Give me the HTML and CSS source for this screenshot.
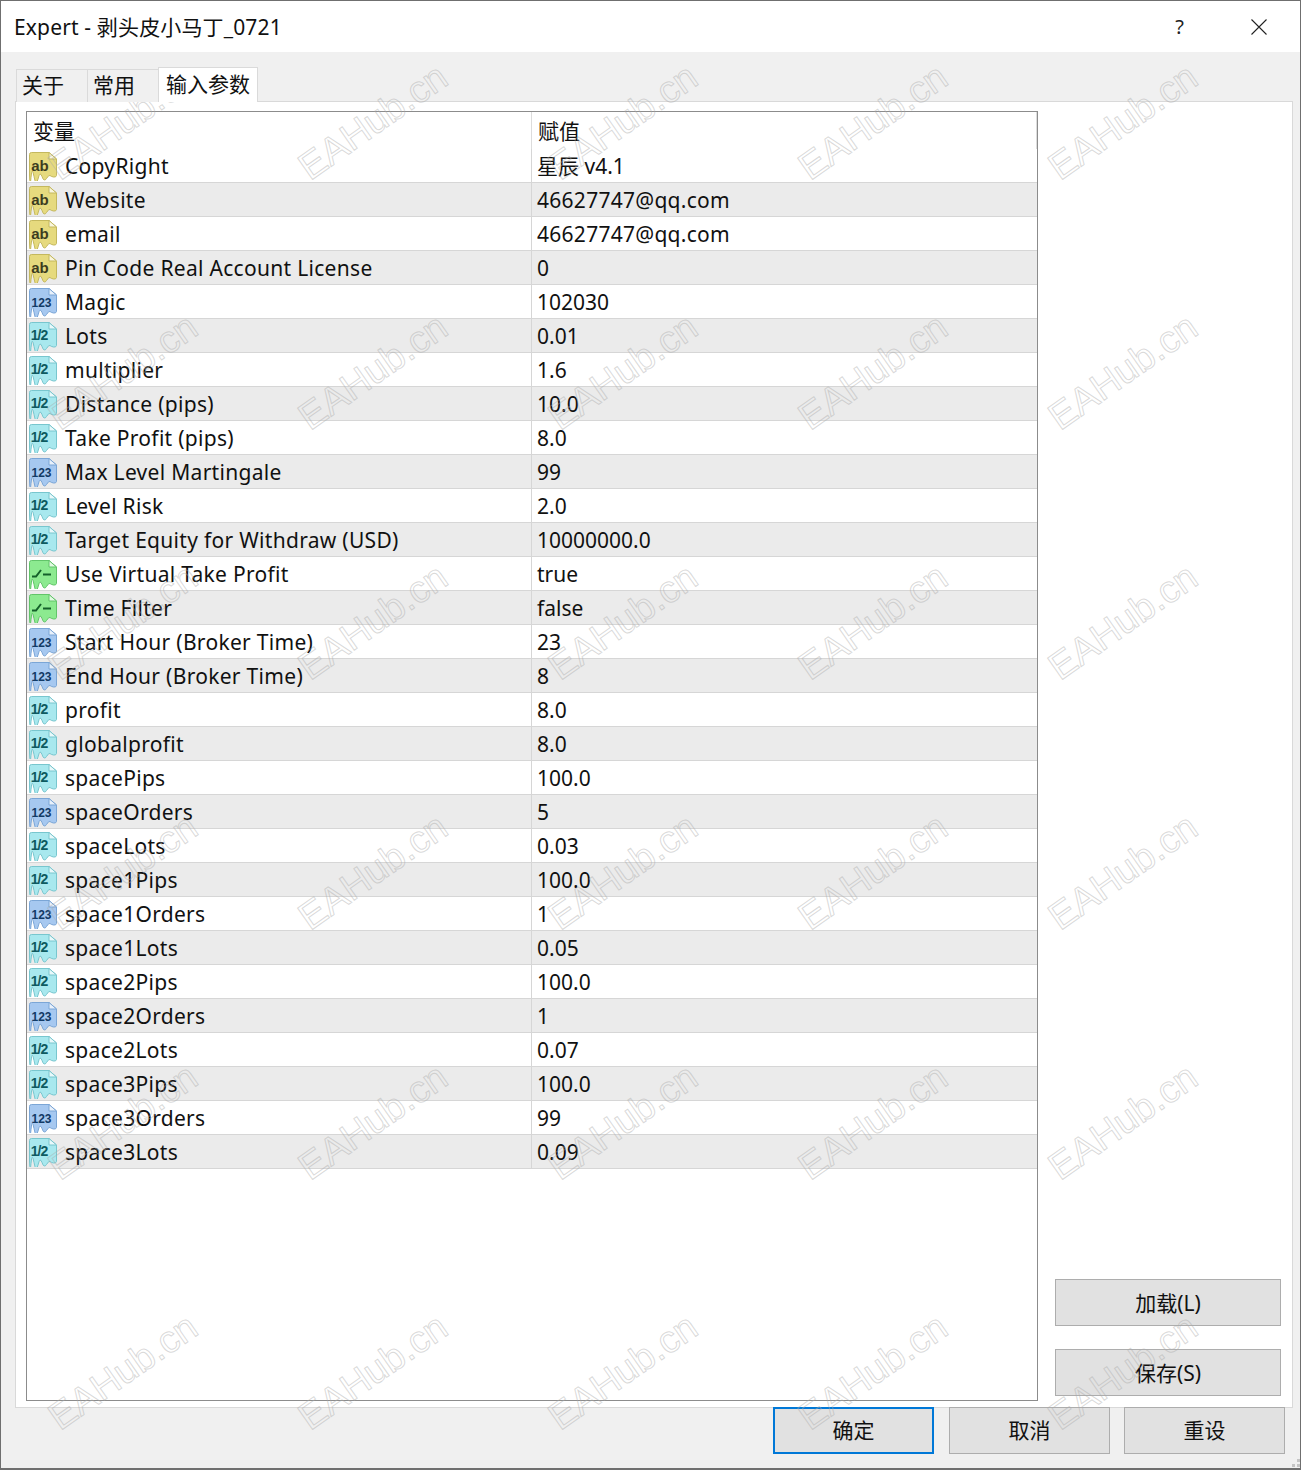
FILE: index.html
```html
<!DOCTYPE html>
<html lang="zh">
<head>
<meta charset="utf-8">
<title>Expert</title>
<link rel="stylesheet" href="styles.css">
</head>
<body>
<svg class="defs" width="0" height="0" aria-hidden="true">
  <defs>
    <symbol id="sheet" viewBox="0 0 30 30">
      <path d="M1.5 3.5Q1.5 1.5 3.5 1.5H21L28.5 8V24.5Q28 26.5 25.5 26T22 24.5T18.5 27.5T14 25.5T10 28T6 25.5T3 26.5T1.5 24Z" fill="currentColor" stroke="var(--edge)" stroke-width="1"/>
      <path d="M21 1.5V8H28.5Z" fill="#ffffff" fill-opacity=".75" stroke="var(--edge)" stroke-width="1"/>
    </symbol>
  </defs>
</svg>
<div class="window">
  <header class="titlebar">
    <span class="title">Expert - 剥头皮小马丁_0721</span>
    <span class="help">?</span>
    <svg class="close" viewBox="0 0 16 16" width="16" height="16"><path d="M0.5 0.5L15.5 15.5M15.5 0.5L0.5 15.5" stroke="#222" stroke-width="1.1" fill="none"/></svg>
  </header>
  <main class="body">
    <nav class="tabs">
      <span class="tab">关于</span>
      <span class="tab">常用</span>
      <span class="tab active">输入参数</span>
    </nav>
    <section class="page">
      <div class="table">
        <div class="head"><span class="hc">变量</span><span class="hc">赋值</span></div>
        <div class="row"><span class="name"><svg class="ic ic-s"><use href="#sheet"/><text x="12" y="20" class="g">ab</text></svg>CopyRight</span><span class="val">星辰 v4.1</span></div>
        <div class="row"><span class="name"><svg class="ic ic-s"><use href="#sheet"/><text x="12" y="20" class="g">ab</text></svg>Website</span><span class="val mail">46627747@qq.com</span></div>
        <div class="row"><span class="name"><svg class="ic ic-s"><use href="#sheet"/><text x="12" y="20" class="g">ab</text></svg>email</span><span class="val mail">46627747@qq.com</span></div>
        <div class="row"><span class="name"><svg class="ic ic-s"><use href="#sheet"/><text x="12" y="20" class="g">ab</text></svg>Pin Code Real Account License</span><span class="val">0</span></div>
        <div class="row"><span class="name"><svg class="ic ic-i"><use href="#sheet"/><text x="13.5" y="20" class="g n">123</text></svg>Magic</span><span class="val">102030</span></div>
        <div class="row"><span class="name"><svg class="ic ic-d"><use href="#sheet"/><text x="11" y="19" class="g n">1/2</text></svg>Lots</span><span class="val">0.01</span></div>
        <div class="row"><span class="name"><svg class="ic ic-d"><use href="#sheet"/><text x="11" y="19" class="g n">1/2</text></svg>multiplier</span><span class="val">1.6</span></div>
        <div class="row"><span class="name"><svg class="ic ic-d"><use href="#sheet"/><text x="11" y="19" class="g n">1/2</text></svg>Distance (pips)</span><span class="val">10.0</span></div>
        <div class="row"><span class="name"><svg class="ic ic-d"><use href="#sheet"/><text x="11" y="19" class="g n">1/2</text></svg>Take Profit (pips)</span><span class="val">8.0</span></div>
        <div class="row"><span class="name"><svg class="ic ic-i"><use href="#sheet"/><text x="13.5" y="20" class="g n">123</text></svg>Max Level Martingale</span><span class="val">99</span></div>
        <div class="row"><span class="name"><svg class="ic ic-d"><use href="#sheet"/><text x="11" y="19" class="g n">1/2</text></svg>Level Risk</span><span class="val">2.0</span></div>
        <div class="row"><span class="name"><svg class="ic ic-d"><use href="#sheet"/><text x="11" y="19" class="g n">1/2</text></svg>Target Equity for Withdraw (USD)</span><span class="val">10000000.0</span></div>
        <div class="row"><span class="name"><svg class="ic ic-b"><use href="#sheet"/><path class="sw" d="M4 17.5H8L13 11M15 15.5H23"/></svg>Use Virtual Take Profit</span><span class="val">true</span></div>
        <div class="row"><span class="name"><svg class="ic ic-b"><use href="#sheet"/><path class="sw" d="M4 17.5H8L13 11M15 15.5H23"/></svg>Time Filter</span><span class="val">false</span></div>
        <div class="row"><span class="name"><svg class="ic ic-i"><use href="#sheet"/><text x="13.5" y="20" class="g n">123</text></svg>Start Hour (Broker Time)</span><span class="val">23</span></div>
        <div class="row"><span class="name"><svg class="ic ic-i"><use href="#sheet"/><text x="13.5" y="20" class="g n">123</text></svg>End Hour (Broker Time)</span><span class="val">8</span></div>
        <div class="row"><span class="name"><svg class="ic ic-d"><use href="#sheet"/><text x="11" y="19" class="g n">1/2</text></svg>profit</span><span class="val">8.0</span></div>
        <div class="row"><span class="name"><svg class="ic ic-d"><use href="#sheet"/><text x="11" y="19" class="g n">1/2</text></svg>globalprofit</span><span class="val">8.0</span></div>
        <div class="row"><span class="name"><svg class="ic ic-d"><use href="#sheet"/><text x="11" y="19" class="g n">1/2</text></svg>spacePips</span><span class="val">100.0</span></div>
        <div class="row"><span class="name"><svg class="ic ic-i"><use href="#sheet"/><text x="13.5" y="20" class="g n">123</text></svg>spaceOrders</span><span class="val">5</span></div>
        <div class="row"><span class="name"><svg class="ic ic-d"><use href="#sheet"/><text x="11" y="19" class="g n">1/2</text></svg>spaceLots</span><span class="val">0.03</span></div>
        <div class="row"><span class="name"><svg class="ic ic-d"><use href="#sheet"/><text x="11" y="19" class="g n">1/2</text></svg>space1Pips</span><span class="val">100.0</span></div>
        <div class="row"><span class="name"><svg class="ic ic-i"><use href="#sheet"/><text x="13.5" y="20" class="g n">123</text></svg>space1Orders</span><span class="val">1</span></div>
        <div class="row"><span class="name"><svg class="ic ic-d"><use href="#sheet"/><text x="11" y="19" class="g n">1/2</text></svg>space1Lots</span><span class="val">0.05</span></div>
        <div class="row"><span class="name"><svg class="ic ic-d"><use href="#sheet"/><text x="11" y="19" class="g n">1/2</text></svg>space2Pips</span><span class="val">100.0</span></div>
        <div class="row"><span class="name"><svg class="ic ic-i"><use href="#sheet"/><text x="13.5" y="20" class="g n">123</text></svg>space2Orders</span><span class="val">1</span></div>
        <div class="row"><span class="name"><svg class="ic ic-d"><use href="#sheet"/><text x="11" y="19" class="g n">1/2</text></svg>space2Lots</span><span class="val">0.07</span></div>
        <div class="row"><span class="name"><svg class="ic ic-d"><use href="#sheet"/><text x="11" y="19" class="g n">1/2</text></svg>space3Pips</span><span class="val">100.0</span></div>
        <div class="row"><span class="name"><svg class="ic ic-i"><use href="#sheet"/><text x="13.5" y="20" class="g n">123</text></svg>space3Orders</span><span class="val">99</span></div>
        <div class="row"><span class="name"><svg class="ic ic-d"><use href="#sheet"/><text x="11" y="19" class="g n">1/2</text></svg>space3Lots</span><span class="val">0.09</span></div>
      </div>
      <aside class="side">
        <button class="btn side-btn">加载(L)</button>
        <button class="btn side-btn">保存(S)</button>
      </aside>
    </section>
    <footer class="actions">
      <button class="btn act primary">确定</button>
      <button class="btn act">取消</button>
      <button class="btn act">重设</button>
    </footer>
  </main>
  <svg class="grip" width="8" height="8" viewBox="0 0 8 8"><path d="M5 0h3v3H5zM0 5h3v3H0zM5 5h3v3H5z" fill="#c4c4c4"/></svg>
  <div class="marks" aria-hidden="true">
    <span class="wm">EAHub.cn</span><span class="wm">EAHub.cn</span><span class="wm">EAHub.cn</span><span class="wm">EAHub.cn</span><span class="wm">EAHub.cn</span>
    <span class="wm">EAHub.cn</span><span class="wm">EAHub.cn</span><span class="wm">EAHub.cn</span><span class="wm">EAHub.cn</span><span class="wm">EAHub.cn</span>
    <span class="wm">EAHub.cn</span><span class="wm">EAHub.cn</span><span class="wm">EAHub.cn</span><span class="wm">EAHub.cn</span><span class="wm">EAHub.cn</span>
    <span class="wm">EAHub.cn</span><span class="wm">EAHub.cn</span><span class="wm">EAHub.cn</span><span class="wm">EAHub.cn</span><span class="wm">EAHub.cn</span>
    <span class="wm">EAHub.cn</span><span class="wm">EAHub.cn</span><span class="wm">EAHub.cn</span><span class="wm">EAHub.cn</span><span class="wm">EAHub.cn</span>
    <span class="wm">EAHub.cn</span><span class="wm">EAHub.cn</span><span class="wm">EAHub.cn</span><span class="wm">EAHub.cn</span><span class="wm">EAHub.cn</span>
  </div>
</div>
</body>
</html>
```
FILE: styles.css
```css
* { box-sizing: border-box; }
html, body { margin: 0; padding: 0; }
body {
  font-family: "Noto Sans", "Noto Sans CJK SC", sans-serif;
  font-size: 21px;
  color: #111;
  background: #f0f0f0;
}
.defs { position: absolute; }
.window {
  position: relative;
  width: 1301px;
  height: 1470px;
  border: 1px solid #6f6f6f;
  border-bottom-width: 2px;
  background: #f0f0f0;
  overflow: hidden;
  display: flex;
  flex-direction: column;
}
.titlebar {
  height: 51px;
  flex: none;
  background: #fff;
  display: flex;
  align-items: center;
  padding: 0 33px 0 13px;
}
.title { flex: 1; line-height: 48px; letter-spacing: .15px; }
.help { font-size: 20px; line-height: 48px; color: #222; margin-right: 67px; }
.close { flex: none; }
.body {
  flex: 1;
  display: flex;
  flex-direction: column;
  padding: 14px 15px 0 14px;
  min-height: 0;
}
.tabs { display: flex; height: 36px; align-items: flex-end; padding-left: 1px; margin-bottom: -1px; position: relative; z-index: 1; }
.tab {
  width: 71px;
  height: 33px;
  border: 1px solid #dadada;
  border-bottom: none;
  border-right: none;
  background: #f0f0f0;
  padding-left: 5px;
  line-height: 31px;
}
.tab.active {
  width: 100px;
  height: 35px;
  background: #fff;
  border-right: 1px solid #dadada;
  padding-left: 7px;
  line-height: 33px;
}
.page {
  flex: none;
  height: 1307px;
  width: 1278px;
  background: #fff;
  border: 1px solid #d9d9d9;
  display: flex;
  padding: 9px 11px 11px 10px;
}
.table {
  width: 1012px;
  height: 1290px;
  border: 1px solid #8c8c8c;
  flex: none;
}
.head, .row { display: grid; grid-template-columns: 505px 1fr; }
.head { height: 37px; }
.hc { padding: 5px 0 0 6px; line-height: 28px; border-right: 1px solid #dcdcdc; }
.row { height: 34px; border-bottom: 1px solid #d6d6d6; line-height: 33px; }
.row:nth-child(odd) { background: #ebebeb; }
.name { display: flex; align-items: center; padding-left: 1px; gap: 7px; border-right: 1px solid #d6d6d6; white-space: nowrap; letter-spacing: .3px; }
.val { padding-left: 5px; line-height: 34px; }
.mail { letter-spacing: .27px; }
.ic { width: 30px; height: 30px; flex: none; }
.ic-s { color: #e6da7e; --edge: #c4b85e; }
.ic-i { color: #a6c8f0; --edge: #7ba6d6; }
.ic-d { color: #a8e8ee; --edge: #78c6ce; }
.ic-b { color: #8cea90; --edge: #62c46a; }
.g { font-family: "Liberation Sans", sans-serif; font-size: 15px; font-weight: 700; fill: #3d3d1f; text-anchor: middle; letter-spacing: 0; }
.g.n { font-size: 12px; fill: #123a66; }
.ic-d .g.n { fill: #0e5a60; font-size: 14px; letter-spacing: -1px; }
.sw { fill: none; stroke: #14602a; stroke-width: 2; }
.side {
  flex: 1;
  display: flex;
  flex-direction: column;
  justify-content: flex-end;
  align-items: flex-end;
  gap: 23px;
}
.btn {
  font: inherit;
  color: #111;
  background: #e1e1e1;
  border: 1px solid #adadad;
  padding: 0;
}
.side-btn { width: 226px; height: 47px; flex: none; padding-bottom: 2px; }
.actions { display: flex; justify-content: flex-end; gap: 14px; margin-top: -1px; }
.act { width: 161px; height: 47px; padding-bottom: 3px; }
.primary { border: 2px solid #0078d7; margin-right: 1px; }
.grip { position: absolute; right: 0; bottom: 1px; }
.marks {
  position: absolute;
  left: 46px;
  top: 66px;
  display: grid;
  grid-template-columns: repeat(5, 250px);
  grid-auto-rows: 250px;
  pointer-events: none;
}
.wm {
  display: block;
  width: 220px;
  height: 50px;
  font-family: "Liberation Sans", sans-serif;
  font-size: 38px;
  line-height: 50px;
  color: transparent;
  -webkit-text-stroke: 1px rgba(170, 170, 170, .45);
  white-space: nowrap;
  transform-origin: 0 100%;
  transform: translate(20px, 74px) rotate(-35deg);
}
```
